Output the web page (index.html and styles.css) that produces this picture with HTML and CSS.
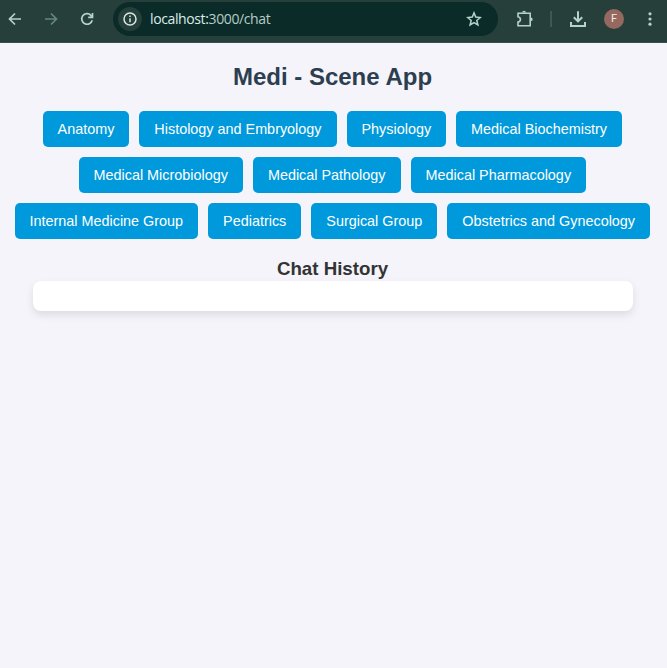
FILE: index.html
```html
<!DOCTYPE html>
<html lang="en">
<head>
<meta charset="utf-8">
<title>Medi - Scene App</title>
<link rel="stylesheet" href="styles.css">
</head>
<body>
<header class="toolbar">
  <svg class="icon back" viewBox="0 0 16 16"><path d="M14 8H3M8 2.5 2.5 8 8 13.5"/></svg>
  <svg class="icon forward" viewBox="0 0 16 16"><path d="M2 8h11M8 2.5 13.5 8 8 13.5"/></svg>
  <svg class="icon reload" viewBox="0 0 16 16"><path d="M13.2 9.2A5.3 5.3 0 1 1 11.9 4.3L13.4 5.8M13.5 2v4.3H9.2"/></svg>
  <div class="address">
    <span class="site-info"><svg class="icon" viewBox="0 0 16 16"><circle cx="8" cy="8" r="6"/><path d="M8 7.2v4M8 4.6v1.5"/></svg></span>
    <span class="url">localhost:<span class="path">3000/chat</span></span>
    <svg class="icon star" viewBox="0 0 16 16"><path d="m8 1.9 1.7 4.2 4.6.4-3.5 3 1.1 4.5L8 11.6 4.1 14l1.1-4.5-3.5-3 4.6-.4z"/></svg>
  </div>
  <svg class="icon extensions" viewBox="0 0 18 18"><path d="M2 3.2H14.2V15.7H2V12C5.2 11.4 5.2 7.4 2 6.8Z"/><path class="solid" d="M6.2 2.6a1.9 1.9 0 0 1 3.8 0zM14.8 7.4a1.9 1.9 0 0 1 0 3.8z"/></svg>
  <span class="divider"></span>
  <svg class="icon download" viewBox="0 0 18 18"><path d="M9 1.2v10M4.8 7.2 9 11.4l4.2-4.2M2 12v4h14v-4"/></svg>
  <span class="avatar">F</span>
  <svg class="icon menu" viewBox="0 0 16 16"><circle class="solid" cx="8" cy="2.8" r="1.6"/><circle class="solid" cx="8" cy="8" r="1.6"/><circle class="solid" cx="8" cy="13.2" r="1.6"/></svg>
</header>
<main class="app">
  <h1>Medi - Scene App</h1>
  <nav class="subjects">
    <button>Anatomy</button>
    <button>Histology and Embryology</button>
    <button>Physiology</button>
    <button>Medical Biochemistry</button>
    <button>Medical Microbiology</button>
    <button>Medical Pathology</button>
    <button>Medical Pharmacology</button>
    <button>Internal Medicine Group</button>
    <button>Pediatrics</button>
    <button>Surgical Group</button>
    <button>Obstetrics and Gynecology</button>
  </nav>
  <h3>Chat History</h3>
  <section class="history"></section>
</main>
</body>
</html>
```
FILE: styles.css
```css
* { box-sizing: border-box; }
body {
  margin: 0;
  min-height: 100vh;
  background: #f4f4fa;
  color: #333;
  font-family: Arial, "Liberation Sans", sans-serif;
}
.toolbar {
  display: flex;
  align-items: center;
  height: 43px;
  padding: 0 9px 5px 7px;
  background: #263f3b;
  border-bottom: 1px solid #38504d;
}
.icon {
  flex: none;
  width: 16px;
  height: 16px;
  fill: none;
  stroke: #b4d3cc;
  stroke-width: 1.7;
}
.icon .solid { fill: #b4d3cc; stroke: none; }
.forward { margin-left: 20px; stroke: #668780; }
.reload { margin-left: 20px; }
.address {
  display: flex;
  align-items: center;
  flex: none;
  width: 385px;
  height: 34px;
  margin-left: 18px;
  padding: 0 16px 0 5px;
  border-radius: 17px;
  background: #0a2b27;
}
.site-info {
  display: flex;
  align-items: center;
  justify-content: center;
  width: 24px;
  height: 24px;
  border-radius: 50%;
  background: #263f3b;
}
.site-info .icon { stroke: #d5e8e3; stroke-width: 1.5; }
.url {
  margin-left: 8px;
  color: #dcece8;
  font: 14px/20px "Open Sans", "Noto Sans", sans-serif;
  letter-spacing: -0.38px;
}
.path { color: #b6ccc7; }
.star { margin-left: auto; stroke-width: 1.5; }
.extensions { width: 18px; height: 18px; margin-left: 18px; stroke-width: 1.6; }
.divider { width: 2px; height: 16px; margin-left: 16px; background: #3d5954; }
.download { width: 18px; height: 18px; margin-left: 17px; stroke-width: 2; }
.avatar {
  flex: none;
  width: 20px;
  height: 20px;
  margin-left: 17px;
  border-radius: 50%;
  background: #95695f;
  color: #f5e8e4;
  font: 400 11px/20px Roboto, sans-serif;
  text-align: center;
}
.menu { margin-left: 18px; }
.app {
  display: flex;
  flex-direction: column;
  align-items: center;
  padding: 20px 10px 0;
}
h1 {
  margin: 0 2px 20px 0;
  color: #2c3e50;
  font-size: 24px;
  line-height: 28px;
}
.subjects {
  display: flex;
  flex-wrap: wrap;
  justify-content: center;
  gap: 10px;
  margin-right: 2.4px;
}
.subjects button {
  height: 36px;
  padding: 0 15px;
  border: 0;
  border-radius: 5px;
  background: #0099dc;
  color: #fff;
  font: 14.4px/16px Arial, "Liberation Sans", sans-serif;
}
h3 {
  margin: 19px 2px 1px 0;
  font-size: 18.72px;
  line-height: 22px;
}
.history {
  width: 600px;
  height: 30px;
  margin-right: 1px;
  border-radius: 8px;
  background: #fff;
  box-shadow: 0 4px 8px rgba(0, 0, 0, 0.1);
}
```
